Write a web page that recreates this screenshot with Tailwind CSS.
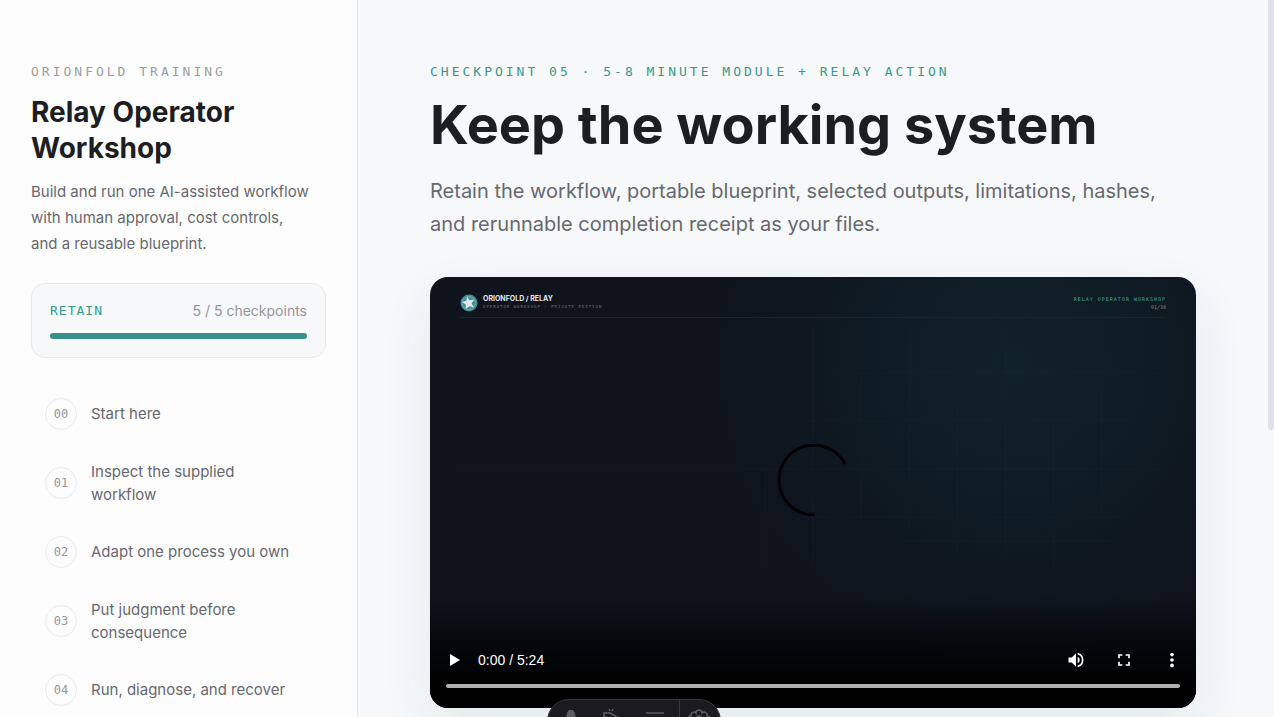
<!DOCTYPE html>
<html lang="en">
<head>
    <meta charset="UTF-8">
    <meta name="viewport" content="width=device-width, initial-scale=1.0">
    <title>Relay Operator Workshop</title>
    <script src="https://cdn.jsdelivr.net/npm/@tailwindcss/browser@4"></script>
</head>
<body class="font-['Inter',sans-serif] text-[#1c1e22] bg-[#f6f8fa]">
    <div class="relative flex h-screen overflow-hidden">
        <!-- Sidebar -->
        <aside class="w-[358px] shrink-0 overflow-hidden border-r border-[#e6e8ee] bg-[#fdfdfe] px-[31px] pt-16">
            <p class="font-['DejaVu_Sans_Mono',monospace] text-[13px] leading-4 tracking-[3px] text-[#9a9ca1]">ORIONFOLD TRAINING</p>
            <h2 class="mt-[14px] text-[28px] leading-9 font-bold">Relay Operator Workshop</h2>
            <p class="mt-[13px] pr-[14px] text-[15px] leading-[26px] text-[#66686f]">Build and run one AI-assisted workflow with human approval, cost controls, and a reusable blueprint.</p>

            <div class="mt-[26px] rounded-[14px] border border-[#e6e8ee] bg-[#f6f8fa] px-[18px] pt-[17px] pb-[18px]">
                <div class="flex items-center justify-between leading-5">
                    <span class="font-['DejaVu_Sans_Mono',monospace] text-[13px] tracking-[1px] text-[#35998a]">RETAIN</span>
                    <span class="text-sm text-[#94969c]">5 / 5 checkpoints</span>
                </div>
                <div class="mt-3 h-[6px] rounded-full bg-[#e6e8ee]">
                    <div class="h-full rounded-full bg-[#38908a]" style="width: 100%"></div>
                </div>
            </div>

            <nav class="mt-[21px] pr-6 pl-[14px] text-[15px] leading-[23px] text-[#66686f]">
                <a href="#" class="flex min-h-[69px] items-center gap-[14px]">
                    <span class="flex size-8 shrink-0 items-center justify-center rounded-full border border-[#e9eaee] font-['DejaVu_Sans_Mono',monospace] text-xs text-[#94969c]">00</span>
                    <span>Start here</span>
                </a>
                <a href="#" class="flex min-h-[69px] items-center gap-[14px]">
                    <span class="flex size-8 shrink-0 items-center justify-center rounded-full border border-[#e9eaee] font-['DejaVu_Sans_Mono',monospace] text-xs text-[#94969c]">01</span>
                    <span>Inspect the supplied workflow</span>
                </a>
                <a href="#" class="flex min-h-[69px] items-center gap-[14px]">
                    <span class="flex size-8 shrink-0 items-center justify-center rounded-full border border-[#e9eaee] font-['DejaVu_Sans_Mono',monospace] text-xs text-[#94969c]">02</span>
                    <span>Adapt one process you own</span>
                </a>
                <a href="#" class="flex min-h-[69px] items-center gap-[14px]">
                    <span class="flex size-8 shrink-0 items-center justify-center rounded-full border border-[#e9eaee] font-['DejaVu_Sans_Mono',monospace] text-xs text-[#94969c]">03</span>
                    <span>Put judgment before consequence</span>
                </a>
                <a href="#" class="flex min-h-[69px] items-center gap-[14px]">
                    <span class="flex size-8 shrink-0 items-center justify-center rounded-full border border-[#e9eaee] font-['DejaVu_Sans_Mono',monospace] text-xs text-[#94969c]">04</span>
                    <span>Run, diagnose, and recover</span>
                </a>
            </nav>
        </aside>

        <!-- Lesson -->
        <main class="min-w-0 flex-1 px-[72px] pt-16">
            <p class="font-['DejaVu_Sans_Mono',monospace] text-[13px] leading-4 tracking-[3px] text-[#35998a]">CHECKPOINT 05 · 5-8 MINUTE MODULE + RELAY ACTION</p>
            <h1 class="mt-[15px] text-[54px] leading-[60px] font-bold">Keep the working system</h1>
            <p class="mt-5 text-xl leading-[33px] text-[#66686f]">Retain the workflow, portable blueprint, selected outputs, limitations, hashes, and rerunnable completion receipt as your files.</p>

            <!-- Video player -->
            <div class="relative mt-9 flex aspect-video flex-col overflow-hidden rounded-[18px] bg-[#0e131c] bg-[radial-gradient(circle_at_76%_20%,#11212a_0%,#0f1c25_18%,#0e131c_44%)] shadow-[0_20px_50px_rgba(40,110,100,0.09)]">
                <svg class="absolute inset-0 size-full" viewBox="0 0 765 430" fill="none" stroke="#4d8a8c" stroke-opacity="0.05" aria-hidden="true">
                    <path d="M382.5 50v240M430.5 95v150M478.5 50v200M526.5 110v170M574.5 50v230M622.5 90v200M670.5 60v180M334.5 190v100"/>
                    <path d="M400 95.5h330M360 143.5h340M30 191.5h700M380 239.5h310M470 263.5h210"/>
                </svg>
                <div class="relative mx-[30px] flex items-center gap-[5px] border-b border-[#17262d] pt-[17px] pb-[5px]">
                    <svg class="size-[18px]" viewBox="0 0 18 18" aria-hidden="true">
                        <circle cx="9" cy="9" r="8.5" fill="#3f8f98"/>
                        <circle cx="9" cy="9" r="6.5" fill="none" stroke="#6fb3b8" stroke-width="0.8"/>
                        <path d="M7 2.5l2.6 3.7 4.6-.6-2.6 3.8 2.3 4-4.5-1.2-3.5 2.9-.2-4.5-3.6-2.6 4.3-1.3z" fill="#e3e6e8"/>
                    </svg>
                    <div class="flex-1 leading-[8px]">
                        <p class="text-[7px] font-bold text-[#e4e8ec]">ORIONFOLD / RELAY</p>
                        <p class="font-['DejaVu_Sans_Mono',monospace] text-[4px] tracking-[1px] text-[#6b7682]">OPERATOR WORKSHOP · PRIVATE EDITION</p>
                    </div>
                    <div class="text-right font-['DejaVu_Sans_Mono',monospace] leading-[8px]">
                        <p class="text-[5px] tracking-[1px] text-[#4fa39d]">RELAY OPERATOR WORKSHOP</p>
                        <p class="text-[5px] text-[#7b8590]">01/38</p>
                    </div>
                </div>
                <div class="absolute inset-x-0 top-0 bottom-6 flex items-center justify-center">
                    <svg class="size-[72px]" viewBox="0 0 72 72" fill="none" stroke="#000" stroke-width="3" aria-hidden="true">
                        <path d="M68 20A35 35 0 1 0 38 71"/>
                    </svg>
                </div>
                <div class="relative mt-auto bg-linear-to-b from-transparent via-black/70 via-50% to-black to-85% pt-10 pb-4">
                    <div class="flex h-12 items-center text-white">
                        <button type="button" aria-label="Play" class="flex size-12 items-center justify-center">
                            <svg class="size-4" viewBox="0 0 16 16" fill="currentColor"><path d="M4 2v12l10-6z"/></svg>
                        </button>
                        <span class="flex-1 font-['Liberation_Sans',sans-serif] text-sm">0:00 / 5:24</span>
                        <button type="button" aria-label="Mute" class="flex size-12 items-center justify-center">
                            <svg class="size-5" viewBox="0 0 24 24" fill="currentColor"><path d="M3 9v6h4l5 5V4L7 9H3zm13.500 3A4.500 4.500 0 0 0 14 7.970v8.050A4.500 4.500 0 0 0 16.500 12zM14 3.230v2.060a7 7 0 0 1 0 13.420v2.060a9 9 0 0 0 0-17.540z"/></svg>
                        </button>
                        <button type="button" aria-label="Full screen" class="flex size-12 items-center justify-center">
                            <svg class="size-5" viewBox="0 0 24 24" fill="currentColor"><path d="M7 14H5v5h5v-2H7v-3zm-2-4h2V7h3V5H5v5zm12 7h-3v2h5v-5h-2v3zM14 5v2h3v3h2V5h-5z"/></svg>
                        </button>
                        <button type="button" aria-label="More options" class="flex size-12 items-center justify-center">
                            <svg class="size-5" viewBox="0 0 24 24" fill="currentColor"><circle cx="12" cy="5.500" r="2.200"/><circle cx="12" cy="12" r="2.200"/><circle cx="12" cy="18.500" r="2.200"/></svg>
                        </button>
                    </div>
                    <div class="flex h-2 items-start px-4">
                        <input type="range" min="0" max="324" value="0" aria-label="Video position" class="h-1 w-full appearance-none rounded-full bg-[#b1b1b1] [&::-webkit-slider-thumb]:appearance-none [&::-webkit-slider-thumb]:opacity-0">
                    </div>
                </div>
            </div>
        </main>

        <!-- Scroll position -->
        <div class="w-[6px] shrink-0" aria-hidden="true">
            <div class="h-3/5 rounded-b-full bg-[#dfe1eb]"></div>
        </div>

        <!-- Floating toolbar, peeking in from the bottom edge -->
        <div class="absolute inset-x-0 -bottom-[26px] flex justify-center pr-[6px]">
            <div class="flex h-11 w-[174px] items-center rounded-[22px] border border-[#38383d] bg-[#1b1b1f] pl-[3px] text-[#5c5c62]">
                <button type="button" aria-label="Pointer" class="flex h-full w-10 items-center justify-center">
                    <svg class="size-6" viewBox="0 0 24 24" fill="currentColor"><path d="M10 1h4l2 3 3 16h-4l-1-10h-4L9 20H5L8 4z"/></svg>
                </button>
                <button type="button" aria-label="Draw" class="flex h-full w-10 items-center justify-center">
                    <svg class="size-6" viewBox="0 0 24 24" fill="none" stroke="currentColor" stroke-width="1.500"><path d="M5 4h6l9 5-3 10H9L5 13l6-1-6-5zM10 0l1 2M14 0l-1 2"/></svg>
                </button>
                <button type="button" aria-label="Notes" class="flex h-full w-12 items-center justify-center">
                    <svg class="size-6" viewBox="0 0 24 24" fill="none" stroke="currentColor" stroke-width="1.500"><path d="M3 4h18M16 9h3M3 13h18M3 19h18"/></svg>
                </button>
                <span class="h-full w-px bg-[#38383d]"></span>
                <button type="button" aria-label="Settings" class="flex h-full w-[38px] items-center justify-center">
                    <svg class="size-6" viewBox="0 0 24 24" fill="none" stroke="currentColor" stroke-width="1.500"><path d="M9 4a3 3 0 0 1 6 0 3 3 0 0 1 5 3 4 4 0 0 1 0 8 3 3 0 0 1-5 3 3 3 0 0 1-6 0 3 3 0 0 1-5-3 4 4 0 0 1 0-8 3 3 0 0 1 5-3z"/><circle cx="12" cy="11" r="4"/></svg>
                </button>
            </div>
        </div>
    </div>
</body>
</html>
